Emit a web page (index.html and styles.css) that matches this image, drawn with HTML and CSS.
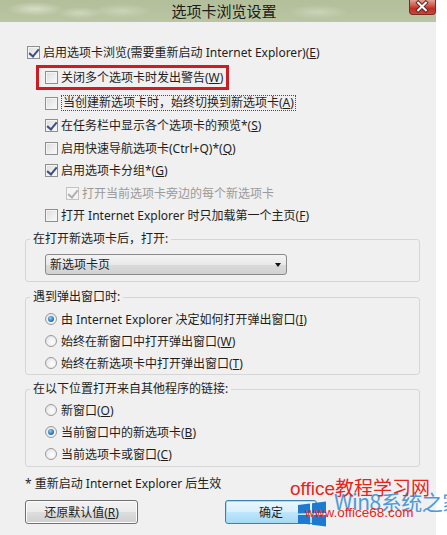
FILE: index.html
```html
<!DOCTYPE html>
<html lang="zh-CN">
<head>
<meta charset="utf-8">
<title>选项卡浏览设置</title>
<link rel="stylesheet" href="styles.css">
</head>
<body>
<div class="window">
  <div class="titlebar">
    <div class="title">选项卡浏览设置</div>
    <div class="close">
      <svg width="27" height="15" viewBox="0 0 27 15">
        <path d="M9.5 3.5 L17.5 11.5 M17.5 3.5 L9.5 11.5" stroke="#5a1a14" stroke-width="4" stroke-linecap="square"/>
        <path d="M9.5 3.5 L17.5 11.5 M17.5 3.5 L9.5 11.5" stroke="#ffffff" stroke-width="2.2" stroke-linecap="square"/>
      </svg>
    </div>
  </div>
  <div class="content">
    <div class="row top"><span class="cb checked"></span><span>启用选项卡浏览(需要重新启动 Internet Explorer)(<u>E</u>)</span></div>
    <div class="highlight">
      <div class="row"><span class="cb"></span><span>关闭多个选项卡时发出警告(<u>W</u>)</span></div>
    </div>
    <div class="row sub after-hl"><span class="cb"></span><span class="focus">当创建新选项卡时，始终切换到新选项卡(<u>A</u>)</span></div>
    <div class="row sub"><span class="cb checked"></span><span>在任务栏中显示各个选项卡的预览*(<u>S</u>)</span></div>
    <div class="row sub"><span class="cb"></span><span>启用快速导航选项卡(Ctrl+Q)*(<u>Q</u>)</span></div>
    <div class="row sub"><span class="cb checked"></span><span>启用选项卡分组*(<u>G</u>)</span></div>
    <div class="row sub2 disabled"><span class="cb checked"></span><span>打开当前选项卡旁边的每个新选项卡</span></div>
    <div class="row sub"><span class="cb"></span><span>打开 Internet Explorer 时只加载第一个主页(<u>F</u>)</span></div>

    <fieldset class="group g1">
      <legend>在打开新选项卡后，打开:</legend>
      <div class="select"><span>新选项卡页</span><span class="arrow"></span></div>
    </fieldset>

    <fieldset class="group g2">
      <legend>遇到弹出窗口时:</legend>
      <div class="row"><span class="rb on"></span><span>由 Internet Explorer 决定如何打开弹出窗口(<u>I</u>)</span></div>
      <div class="row"><span class="rb"></span><span>始终在新窗口中打开弹出窗口(<u>W</u>)</span></div>
      <div class="row"><span class="rb"></span><span>始终在新选项卡中打开弹出窗口(<u>T</u>)</span></div>
    </fieldset>

    <fieldset class="group g3">
      <legend>在以下位置打开来自其他程序的链接:</legend>
      <div class="row"><span class="rb"></span><span>新窗口(<u>O</u>)</span></div>
      <div class="row"><span class="rb on"></span><span>当前窗口中的新选项卡(<u>B</u>)</span></div>
      <div class="row"><span class="rb"></span><span>当前选项卡或窗口(<u>C</u>)</span></div>
    </fieldset>

    <p class="note">* 重新启动 Internet Explorer 后生效</p>

    <div class="buttons">
      <button class="btn">还原默认值(<u>R</u>)</button>
      <button class="btn primary">确定</button>
    </div>
  </div>
</div>

<div class="wm-logo">
  <svg width="30" height="26" viewBox="0 0 30 26">
    <path d="M1 4 L13 2.5 L13 12 L1 12.5 Z" fill="#1c7bd0"/>
    <path d="M15 2.2 L29 0.5 L29 12 L15 12 Z" fill="#1c7bd0"/>
    <path d="M1 14 L13 14 L13 23.5 L1 22 Z" fill="#1c7bd0"/>
    <path d="M15 14 L29 14 L29 25.5 L15 23.8 Z" fill="#1c7bd0"/>
  </svg>
</div>
<div class="wm-win8">Win8系统之家</div>
<div class="wm-office">office教程学习网</div>
<div class="wm-url">www.office68.com</div>
</body>
</html>
```

FILE: styles.css
```css
* { box-sizing: border-box; }
html, body { margin: 0; padding: 0; }
body {
  width: 447px;
  height: 535px;
  overflow: hidden;
  position: relative;
  background: #ffffff;
  font-family: "Noto Sans", "Noto Sans CJK SC", sans-serif;
  font-size: 12px;
  color: #1e1e1e;
}
.window {
  width: 436px;
  height: 535px;
  background: #f0f0f0;
}
.titlebar {
  height: 22px;
  display: flex;
  background:
    radial-gradient(ellipse 28px 7px at 35px 9px, rgba(222,228,208,0.8), rgba(222,228,208,0)),
    radial-gradient(ellipse 22px 6px at 80px 13px, rgba(215,222,200,0.7), rgba(215,222,200,0)),
    radial-gradient(ellipse 30px 7px at 122px 11px, rgba(215,222,200,0.6), rgba(215,222,200,0)),
    radial-gradient(ellipse 30px 7px at 318px 12px, rgba(215,222,200,0.6), rgba(215,222,200,0)),
    linear-gradient(#b2bf9a, #bac5a3);
}
.title {
  flex: 1;
  text-align: center;
  padding-left: 39px;
  font-family: "Noto Sans CJK SC", sans-serif;
  font-size: 15px;
  line-height: 22px;
  color: #1c1c1c;
}
.close {
  width: 27px;
  height: 15px;
  border: 1px solid #7a2a22;
  border-top: none;
  border-radius: 0 0 4px 4px;
  background: linear-gradient(#e2a096, #cf4f42 45%, #bd2f22 60%, #c9473a);
  display: flex;
}
.close svg { display: block; margin: -1px 0 0 -1px; }

.content {
  padding: 19px 16px 0 25px;
}
.row {
  display: flex;
  align-items: center;
  height: 22.5px;
  gap: 3px;
  white-space: nowrap;
  line-height: 15px;
}
.row.top { margin-left: 2px; }
.row.sub { margin-left: 20px; }
.row.sub2 { margin-left: 41px; }
.row.after-hl { margin-top: 2px; }
.row.disabled { color: #9a9a9a; }

.highlight {
  margin: 1.5px 0 0 11px;
  width: 193px;
  height: 25px;
  border: 3px solid #cc1d22;
}
.highlight .row {
  margin-left: 6px;
  height: 19px;
}

.cb {
  flex: none;
  width: 13px;
  height: 13px;
  border: 1px solid #8e8f8f;
  background: linear-gradient(135deg, #dcdcdc, #fbfbfb);
  box-shadow: inset 0 0 0 1px #f4f4f4;
  position: relative;
}
.cb.checked::after {
  content: "";
  position: absolute;
  left: 3px;
  top: 0px;
  width: 4px;
  height: 8px;
  border: solid #3d4f82;
  border-width: 0 2px 2px 0;
  transform: rotate(40deg);
}
.disabled .cb { border-color: #c4c4c4; background: #f4f4f4; }
.disabled .cb.checked::after { border-color: #b0b0b0; }

.focus {
  border: 1px dotted #4a4a4a;
  padding: 0 1px;
  line-height: 14px;
}

.group {
  border: 1px solid #d6d6d6;
  border-radius: 3px;
  margin: 0;
  min-width: 0;
}
.group legend {
  padding: 0 3px;
  margin-left: 2px;
  line-height: 16px;
}
.g1 { margin-top: 4px; padding: 7px 2px 6px; }
.g2 { margin-top: 7px; padding: 3px 2px 0; }
.g3 { margin-top: 6px; padding: 2px 2px 1px; }
.group .row { height: 22px; gap: 4px; margin-left: 17px; }

.select {
  margin-left: 17px;
  width: 242px;
  height: 21px;
  border: 1px solid #8a8a8a;
  border-radius: 3px;
  background: linear-gradient(#f3f3f3, #e9e9e9 50%, #dadada 51%, #d2d2d2);
  display: flex;
  align-items: center;
  justify-content: space-between;
  padding: 0 5px 0 4px;
  line-height: 15px;
}
.arrow {
  width: 0;
  height: 0;
  border-left: 3.5px solid transparent;
  border-right: 3.5px solid transparent;
  border-top: 4px solid #111;
}

.rb {
  flex: none;
  width: 12px;
  height: 12px;
  border-radius: 50%;
  border: 1px solid #9a9a9a;
  background: radial-gradient(circle at 60% 60%, #ffffff, #dedede);
  display: flex;
  align-items: center;
  justify-content: center;
}
.rb.on::after {
  content: "";
  width: 6px;
  height: 6px;
  border-radius: 50%;
  background: radial-gradient(circle at 40% 35%, #8fd0f4, #2a74b8 60%, #1b4f8a);
}

.note {
  margin: 9px 0 0 0;
  line-height: 16px;
}
.buttons {
  display: flex;
  gap: 87px;
  margin-top: 8px;
}
.btn {
  width: 113px;
  height: 24px;
  border: 1px solid #707070;
  border-radius: 3px;
  background: linear-gradient(#f2f2f2, #ebebeb 48%, #dddddd 52%, #cfcfcf);
  box-shadow: inset 0 0 0 1px #fcfcfc;
  font-family: "Noto Sans", "Noto Sans CJK SC", sans-serif;
  font-size: 12px;
  color: #1e1e1e;
  padding: 0;
}
.btn.primary {
  width: 92px;
  border-color: #3c7fb1;
  box-shadow: inset 0 0 0 1px #a8dcf5;
  background: linear-gradient(#eaf6fd, #d9f0fc 48%, #bee6fd 52%, #a7d9f5);
}

.wm-logo {
  position: absolute;
  left: 297px;
  top: 501px;
}
.wm-logo svg { display: block; }
.wm-win8 {
  position: absolute;
  left: 334px;
  top: 488px;
  font-family: "Noto Sans CJK SC", sans-serif;
  font-size: 21px;
  line-height: 26px;
  color: #4f9bd8;
  white-space: nowrap;
  letter-spacing: -0.5px;
}
.wm-office {
  position: absolute;
  left: 290px;
  top: 478px;
  font-family: "Liberation Sans", "Noto Sans CJK SC", sans-serif;
  font-size: 19px;
  line-height: 22px;
  color: #e5261d;
  white-space: nowrap;
}
.wm-url {
  position: absolute;
  left: 305px;
  top: 505px;
  font-family: "Liberation Sans", sans-serif;
  font-size: 13.5px;
  line-height: 16px;
  color: #e5261d;
  white-space: nowrap;
}
```
